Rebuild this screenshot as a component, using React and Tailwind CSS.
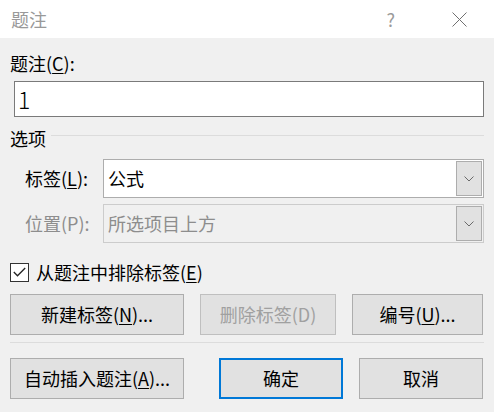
import React from "react";

const font = { fontFamily: '"Noto Sans CJK SC", "Noto Sans", sans-serif' };

const Chevron = () => (
  <svg width="10" height="6" viewBox="0 0 10 6" fill="none">
    <path d="M0.5 0.5 L5 5 L9.5 0.5" stroke="#6a6a6a" strokeWidth="1" />
  </svg>
);

const Button = ({ children, disabled, primary, className = "" }) => (
  <button
    className={`h-[41px] bg-[#e1e1e1] flex items-center justify-center text-[18px] ${
      primary
        ? "border-2 border-[#0078d7]"
        : disabled
        ? "border border-[#bfbfbf] text-[#a0a0a0]"
        : "border border-[#adadad] text-black"
    } ${className}`}
  >
    {children}
  </button>
);

const Select = ({ value, disabled }) => (
  <div
    className={`flex-1 h-[39px] flex items-center border ${
      disabled ? "border-[#cccccc] bg-[#f0f0f0] text-[#8d8d8d]" : "border-[#adadad] bg-white text-black"
    }`}
  >
    <span className="flex-1 pl-[4px] text-[18px]">{value}</span>
    <div className="w-[26px] h-[35px] mr-[1px] bg-[#e1e1e1] border border-[#adadad] flex items-center justify-center">
      <Chevron />
    </div>
  </div>
);

export default function App() {
  return (
    <div className="w-[494px] h-[412px] bg-[#f0f0f0] flex flex-col" style={font}>
      {/* title bar */}
      <div className="h-[38px] bg-white flex items-center shrink-0">
        <span className="ml-[11px] text-[18px] text-[#999999]">题注</span>
        <span className="ml-auto text-[18px] text-[#9a9a9a]">?</span>
        <svg className="ml-[57px] mr-[27px]" width="15" height="15" viewBox="0 0 15 15">
          <path d="M0.5 0.5 L14.5 14.5 M14.5 0.5 L0.5 14.5" stroke="#707070" strokeWidth="1" />
        </svg>
      </div>

      <div className="px-[10px] flex flex-col">
        <div className="mt-[13px] h-[24px] leading-[24px] text-[18px]">
          题注(<span className="underline underline-offset-2">C</span>):
        </div>
        <div className="mt-[6px] ml-[4px] h-[36px] bg-white border border-[#7a7a7a] flex items-center pl-[3px] text-[23px] font-light text-black">
          1
        </div>

        {/* options */}
        <div className="mt-[9px] h-[24px] flex items-center">
          <span className="text-[18px]">选项</span>
          <div className="flex-1 ml-[5px] h-px bg-[#dcdcdc] -mt-[6px]"></div>
        </div>

        <div className="mt-[9px] h-[39px] flex items-center">
          <span className="ml-[15px] w-[78px] text-[18px]">
            标签(<span className="underline underline-offset-2">L</span>):
          </span>
          <Select value="公式" />
        </div>
        <div className="mt-[6px] h-[39px] flex items-center">
          <span className="ml-[15px] w-[78px] text-[18px] text-[#8d8d8d]">位置(P):</span>
          <Select value="所选项目上方" disabled />
        </div>

        <div className="mt-[18px] flex items-center h-[22px]">
          <div className="w-[19px] h-[19px] border border-[#333333] bg-white flex items-center justify-center">
            <svg width="13" height="10" viewBox="0 0 13 10">
              <path d="M0.8 5 L4.5 8.8 L12.2 1" stroke="#222222" strokeWidth="1.3" fill="none" />
            </svg>
          </div>
          <span className="ml-[7px] text-[18px]">
            从题注中排除标签(<span className="underline underline-offset-2">E</span>)
          </span>
        </div>

        <div className="mt-[11px] h-[41px] flex">
          <Button className="w-[174px]">
            新建标签(<span className="underline underline-offset-2">N</span>)...
          </Button>
          <Button disabled className="w-[136px] ml-[16px]">
            删除标签(D)
          </Button>
          <Button className="w-[131px] ml-[16px]">
            编号(<span className="underline underline-offset-2">U</span>)...
          </Button>
        </div>

        <div className="mt-[7px] h-px bg-[#dcdcdc]"></div>

        <div className="mt-[15px] h-[41px] flex">
          <Button className="w-[174px]">
            自动插入题注(<span className="underline underline-offset-2">A</span>)...
          </Button>
          <Button primary className="w-[124px] ml-[35px]">
            确定
          </Button>
          <Button className="w-[124px] ml-[16px]">取消</Button>
        </div>
      </div>
    </div>
  );
}
